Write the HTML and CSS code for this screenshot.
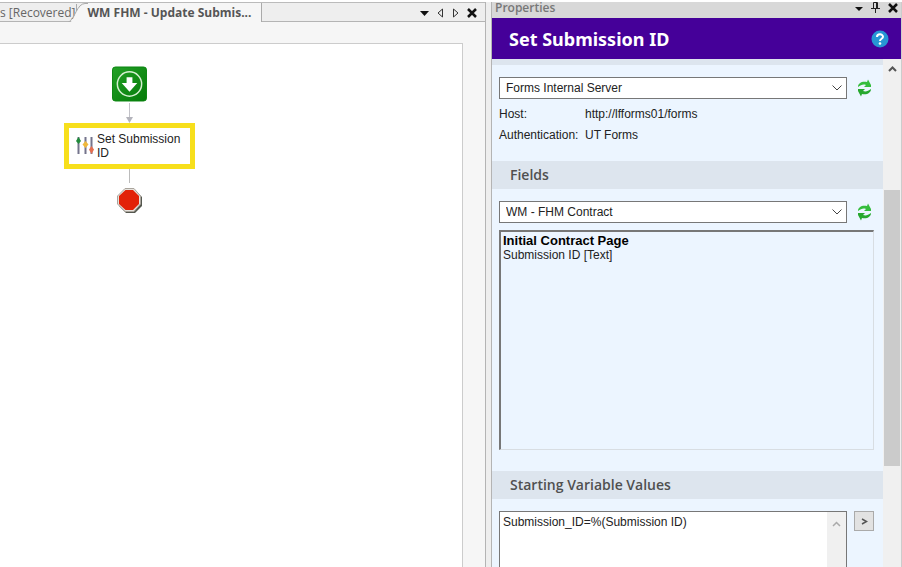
FILE: index.html
```
<!DOCTYPE html>
<html lang="en">
<head>
    <meta charset="UTF-8">
    <meta name="viewport" content="width=device-width, initial-scale=1.0">
    <title>Set Submission ID</title>
    <link rel="stylesheet" href="styles.css">
</head>
<body>
    <div class="app">
        <main class="editor">
            <div class="tab-bar">
                <button class="tab">s [Recovered]</button>
                <svg class="tab-edge" width="20" height="20" viewBox="0 0 20 20">
                    <path d="M2 20C7 15 10 1 17 1H20V20Z" fill="#f6f6f6"/>
                    <path d="M0 19.500C7 16 9 .5 17 .5H20M8.500 1V8" fill="none" stroke="#ababab"/>
                </svg>
                <button class="tab tab-active">WM FHM - Update Submis...</button>
                <div class="tab-tools">
                    <button class="tool" aria-label="Open documents">
                        <svg width="9" height="10" viewBox="0 0 9 10"><path d="M0 3H9L4.500 8Z" fill="#111"/></svg>
                    </button>
                    <button class="tool" aria-label="Previous">
                        <svg width="7" height="10" viewBox="0 0 7 10"><path d="M5.500 1V9L1 5Z" fill="none" stroke="#333"/></svg>
                    </button>
                    <button class="tool" aria-label="Next">
                        <svg width="7" height="10" viewBox="0 0 7 10"><path d="M1.500 1V9L6 5Z" fill="none" stroke="#333"/></svg>
                    </button>
                    <button class="tool" aria-label="Close">
                        <svg width="10" height="10" viewBox="0 0 10 10"><path d="M1 1L9 9M9 1L1 9" stroke="#111" stroke-width="2.500"/></svg>
                    </button>
                </div>
            </div>
            <div class="workspace">
                <div class="canvas">
                    <div class="flow">
                        <svg width="35" height="36" viewBox="0 0 36 36">
                            <defs>
                                <linearGradient id="start" x1="0" y1="0" x2="1" y2="1">
                                    <stop offset="0" stop-color="#23a126"/>
                                    <stop offset="1" stop-color="#047a08"/>
                                </linearGradient>
                            </defs>
                            <rect x=".5" y=".5" width="35" height="35" rx="3" fill="url(#start)" stroke="#0a8511"/>
                            <circle cx="18" cy="18" r="12.500" fill="none" stroke="#d5f0d0" stroke-width="1.500"/>
                            <path d="M15 11H21V17H26L18 26L10 17H15Z" fill="#fff"/>
                        </svg>
                        <svg width="7" height="21" viewBox="0 0 7 21">
                            <path d="M3.500 1V17" stroke="#c2c2c8"/>
                            <path d="M0 15H7L3.500 21Z" fill="#b4b4bc"/>
                        </svg>
                        <div class="activity">
                            <svg width="18" height="20" viewBox="0 0 18 20">
                                <path d="M2.500 1V18M9.500 1V18M15.500 1V18" stroke="#74748c" stroke-width="2"/>
                                <path d="M2.500 1L5 5L2.500 8L0 5Z" fill="#218b3b"/>
                                <path d="M9.500 5L12.500 8.500L9.500 12L6.500 8.500Z" fill="#f0b93a"/>
                                <path d="M15.500 10L18 13.500L15.500 18L13 13.500Z" fill="#e56f50"/>
                            </svg>
                            <span>Set Submission ID</span>
                        </div>
                        <div class="connector"></div>
                        <svg class="stop" width="26" height="26" viewBox="0 0 26 26">
                            <path d="M9 2H18L25 9V18L18 25H9L2 18V9Z" fill="#55584f"/>
                            <path d="M8 .5H17L23.500 8V16L17 23.500H8L.5 16V8Z" fill="#e6e2dc" stroke="#aaa49c"/>
                            <path d="M8.500 2H16L22 8V16L16 22H8.500L2 16V8Z" fill="#e22208"/>
                        </svg>
                    </div>
                </div>
            </div>
        </main>

        <aside class="properties">
            <div class="panel-caption">
                <span>Properties</span>
                <div class="panel-tools">
                    <button class="tool" aria-label="Window position">
                        <svg width="8" height="10" viewBox="0 0 8 10"><path d="M0 4H8L4 8Z" fill="#111"/></svg>
                    </button>
                    <button class="tool" aria-label="Auto hide">
                        <svg width="9" height="11" viewBox="0 0 9 11"><path d="M2.500 6V.5H6.500V6M5.500 1V6M0 6.500H9M4.500 7V11" fill="none" stroke="#222"/></svg>
                    </button>
                    <button class="tool" aria-label="Close">
                        <svg width="10" height="10" viewBox="0 0 10 10"><path d="M1 1L9 9M9 1L1 9" stroke="#111" stroke-width="2.500"/></svg>
                    </button>
                </div>
            </div>
            <header class="panel-title">
                <h1>Set Submission ID</h1>
                <button class="tool" aria-label="Help">
                    <svg width="18" height="18" viewBox="0 0 18 18">
                        <circle cx="9" cy="9" r="8.500" fill="#2796d4"/>
                        <path d="M6 7C6 3.500 12 3.500 12 6.800C12 9 9 8.500 9 11" fill="none" stroke="#fff" stroke-width="2"/>
                        <circle cx="9" cy="13.500" r="1.300" fill="#fff"/>
                    </svg>
                </button>
            </header>
            <div class="panel-scroll">
                <div class="panel-body">
                    <section class="group group-server">
                        <div class="row">
                            <div class="combo">
                                <select aria-label="Server">
                                    <option>Forms Internal Server</option>
                                </select>
                                <svg class="chevron" width="10" height="6" viewBox="0 0 10 6"><path d="M.5 .5L5 5L9.500 .5" fill="none" stroke="#444"/></svg>
                            </div>
                            <button class="tool" aria-label="Refresh servers">
                                <svg width="15" height="18" viewBox="0 0 15 18">
                                    <path d="M1 8C1 4 5 2 10 3L11 .5L14 6L14 8L7 8L9 6C6 5 4 6 1 8Z" fill="#35bd3c"/>
                                    <path d="M14 10C14 14 10 16 5 15L4 17.500L1 12L1 10L8 10L6 12C9 13 11 12 14 10Z" fill="#27a82e"/>
                                </svg>
                            </button>
                        </div>
                        <dl class="details">
                            <dt>Host:</dt>
                            <dd>http://lfforms01/forms</dd>
                            <dt>Authentication:</dt>
                            <dd>UT Forms</dd>
                        </dl>
                    </section>
                    <h2><label for="form">Fields</label></h2>
                    <section class="group">
                        <div class="row">
                            <div class="combo">
                                <select id="form">
                                    <option>WM - FHM Contract</option>
                                </select>
                                <svg class="chevron" width="10" height="6" viewBox="0 0 10 6"><path d="M.5 .5L5 5L9.500 .5" fill="none" stroke="#444"/></svg>
                            </div>
                            <button class="tool" aria-label="Refresh forms">
                                <svg width="15" height="18" viewBox="0 0 15 18">
                                    <path d="M1 8C1 4 5 2 10 3L11 .5L14 6L14 8L7 8L9 6C6 5 4 6 1 8Z" fill="#35bd3c"/>
                                    <path d="M14 10C14 14 10 16 5 15L4 17.500L1 12L1 10L8 10L6 12C9 13 11 12 14 10Z" fill="#27a82e"/>
                                </svg>
                            </button>
                        </div>
                        <ul class="field-list">
                            <li class="field-page">Initial Contract Page</li>
                            <li>Submission ID [Text]</li>
                        </ul>
                    </section>
                    <h2><label for="values">Starting Variable Values</label></h2>
                    <section class="group">
                        <div class="row row-top">
                            <div class="values">
                                <textarea id="values">Submission_ID=%(Submission ID)</textarea>
                                <div class="values-scroll">
                                    <svg width="9" height="6" viewBox="0 0 9 6"><path d="M1 5L4.500 1.500L8 5" fill="none" stroke="#aaa" stroke-width="1.500"/></svg>
                                </div>
                            </div>
                            <button class="token" aria-label="Insert token">
                                <svg width="7" height="7" viewBox="0 0 7 7"><path d="M1 1L5.500 3.500L1 6" fill="none" stroke="#555" stroke-width="1.500"/></svg>
                            </button>
                        </div>
                    </section>
                </div>
                <div class="scrollbar">
                    <svg width="9" height="6" viewBox="0 0 9 6"><path d="M1 5L4.500 1.500L8 5" fill="none" stroke="#555" stroke-width="2"/></svg>
                    <div class="thumb"></div>
                </div>
            </div>
        </aside>
    </div>
</body>
</html>
```

FILE: styles.css
```
* {
    box-sizing: border-box;
}
body {
    margin: 0;
    background: #fff;
    color: #222;
    font-family: "Liberation Sans", Arial, sans-serif;
    font-size: 12px;
    line-height: 14px;
}
button,
select,
textarea {
    font: inherit;
    color: inherit;
    border-radius: 0;
}
svg {
    display: block;
    flex: none;
}
.app {
    display: flex;
    gap: 5px;
    height: 100vh;
    padding-top: 2px;
    background: linear-gradient(#fff 2px, #eee 2px);
    overflow: hidden;
}
.tool {
    padding: 0;
    border: none;
    background: none;
}

/* document area */
.editor {
    flex: 1;
    min-width: 0;
    display: flex;
    flex-direction: column;
    border-right: 1px solid #b4b4b4;
}
.tab-bar {
    display: flex;
    height: 20px;
    background: #eee;
    border-top: 1px solid #bbb;
    box-shadow: inset 0 -1px #b4b4b4;
}
.tab {
    padding: 0;
    border: none;
    background: none;
    color: #666;
    font-family: "Open Sans", "Noto Sans", sans-serif;
    font-size: 12px;
    line-height: 18px;
    white-space: nowrap;
}
.tab-active {
    width: 174px;
    background: #f6f6f6;
    border-right: 1px solid #aaa;
    color: #555;
    font-weight: 700;
    text-align: left;
}
.tab-edge {
    margin-left: -8px;
}
.tab-tools {
    display: flex;
    align-items: center;
    gap: 8px;
    margin-left: auto;
    padding-right: 8px;
}
.workspace {
    flex: 1;
    display: flex;
    padding: 21px 22px 0 0;
    background: #f6f6f6;
}
.canvas {
    flex: 1;
    padding: 22px 0 0 64px;
    background: #fff;
    border: 1px solid #ccc;
    border-width: 1px 1px 0 0;
}
.flow {
    display: flex;
    flex-direction: column;
    align-items: center;
    width: 131px;
}
.activity {
    display: flex;
    align-items: center;
    gap: 3px;
    width: 131px;
    height: 46px;
    padding: 0 7px;
    border: 5px solid #f7df1c;
}
.connector {
    width: 1px;
    height: 14px;
    background: #bbb;
}
.stop {
    margin-top: 5px;
}

/* properties panel */
.properties {
    display: flex;
    flex-direction: column;
    width: 411px;
    border-left: 1px solid #b4b4b4;
    border-right: 1px solid #ccc;
}
.panel-caption {
    display: flex;
    align-items: flex-start;
    justify-content: space-between;
    height: 16px;
    padding: 0 3px;
    background: #d8d8d8;
    color: #777;
    font-family: "Open Sans", "Noto Sans", sans-serif;
    font-weight: 600;
    line-height: 12px;
}
.panel-tools {
    display: flex;
    align-items: center;
    gap: 8px;
}
.panel-title {
    display: flex;
    align-items: center;
    justify-content: space-between;
    height: 41px;
    padding: 0 12px 0 17px;
    background: #450099;
    color: #fff;
}
h1 {
    margin: 0;
    font-family: "Noto Sans", "Open Sans", sans-serif;
    font-size: 18px;
    line-height: 24px;
}
.panel-scroll {
    flex: 1;
    display: flex;
    min-height: 0;
}
.panel-body {
    flex: 1;
    min-width: 0;
    overflow: hidden;
    background: #ecf5ff;
    border-top: 6px solid #dde5ee;
}
h2 {
    margin: 0;
    padding: 0 18px;
    background: #dde5ee;
    color: #505050;
    font-family: "Open Sans", "Noto Sans", sans-serif;
    font-size: 14px;
    font-weight: 600;
    line-height: 28px;
}
.group {
    padding: 12px 9px 21px 7px;
}
.group-server {
    padding-bottom: 19px;
}
.row {
    display: flex;
    align-items: center;
    gap: 8px;
}
.row > .tool {
    width: 19px;
    padding-left: 2px;
}
.row-top {
    align-items: flex-start;
    gap: 7px;
}
.combo {
    position: relative;
    flex: 1;
}
.combo select {
    display: block;
    width: 100%;
    height: 22px;
    padding: 0 6px;
    appearance: none;
    background: #fff;
    border: 1px solid #777;
}
.chevron {
    position: absolute;
    top: 8px;
    right: 5px;
    pointer-events: none;
}
.details {
    display: grid;
    grid-template-columns: 86px 1fr;
    row-gap: 7px;
    margin: 8px 0 0;
}
.details dd {
    margin: 0;
}
.field-list {
    height: 220px;
    margin: 7px 0 0;
    padding: 2px;
    list-style: none;
    border: 1px solid #d8dde2;
    border-top: 2px solid #777;
    border-left: 2px solid #777;
}
.field-page {
    color: #000;
    font-size: 13px;
    font-weight: bold;
}
.values {
    flex: 1;
    display: flex;
    height: 90px;
    background: #fff;
    border: 1px solid #777;
}
.values textarea {
    flex: 1;
    min-width: 0;
    padding: 3px;
    border: none;
    resize: none;
    overflow: hidden;
    background: none;
}
.values-scroll {
    width: 19px;
    padding: 9px 5px;
    background: #f0f0f0;
}
.token {
    display: flex;
    align-items: center;
    justify-content: center;
    width: 20px;
    height: 20px;
    padding: 0;
    background: #e2e2e2;
    border: 1px solid #aaa;
}
.scrollbar {
    display: flex;
    flex-direction: column;
    align-items: center;
    width: 18px;
    padding-top: 7px;
    background: #f0f0f0;
}
.thumb {
    width: 16px;
    height: 55%;
    margin-top: 118px;
    background: #cbcbcb;
}
```
